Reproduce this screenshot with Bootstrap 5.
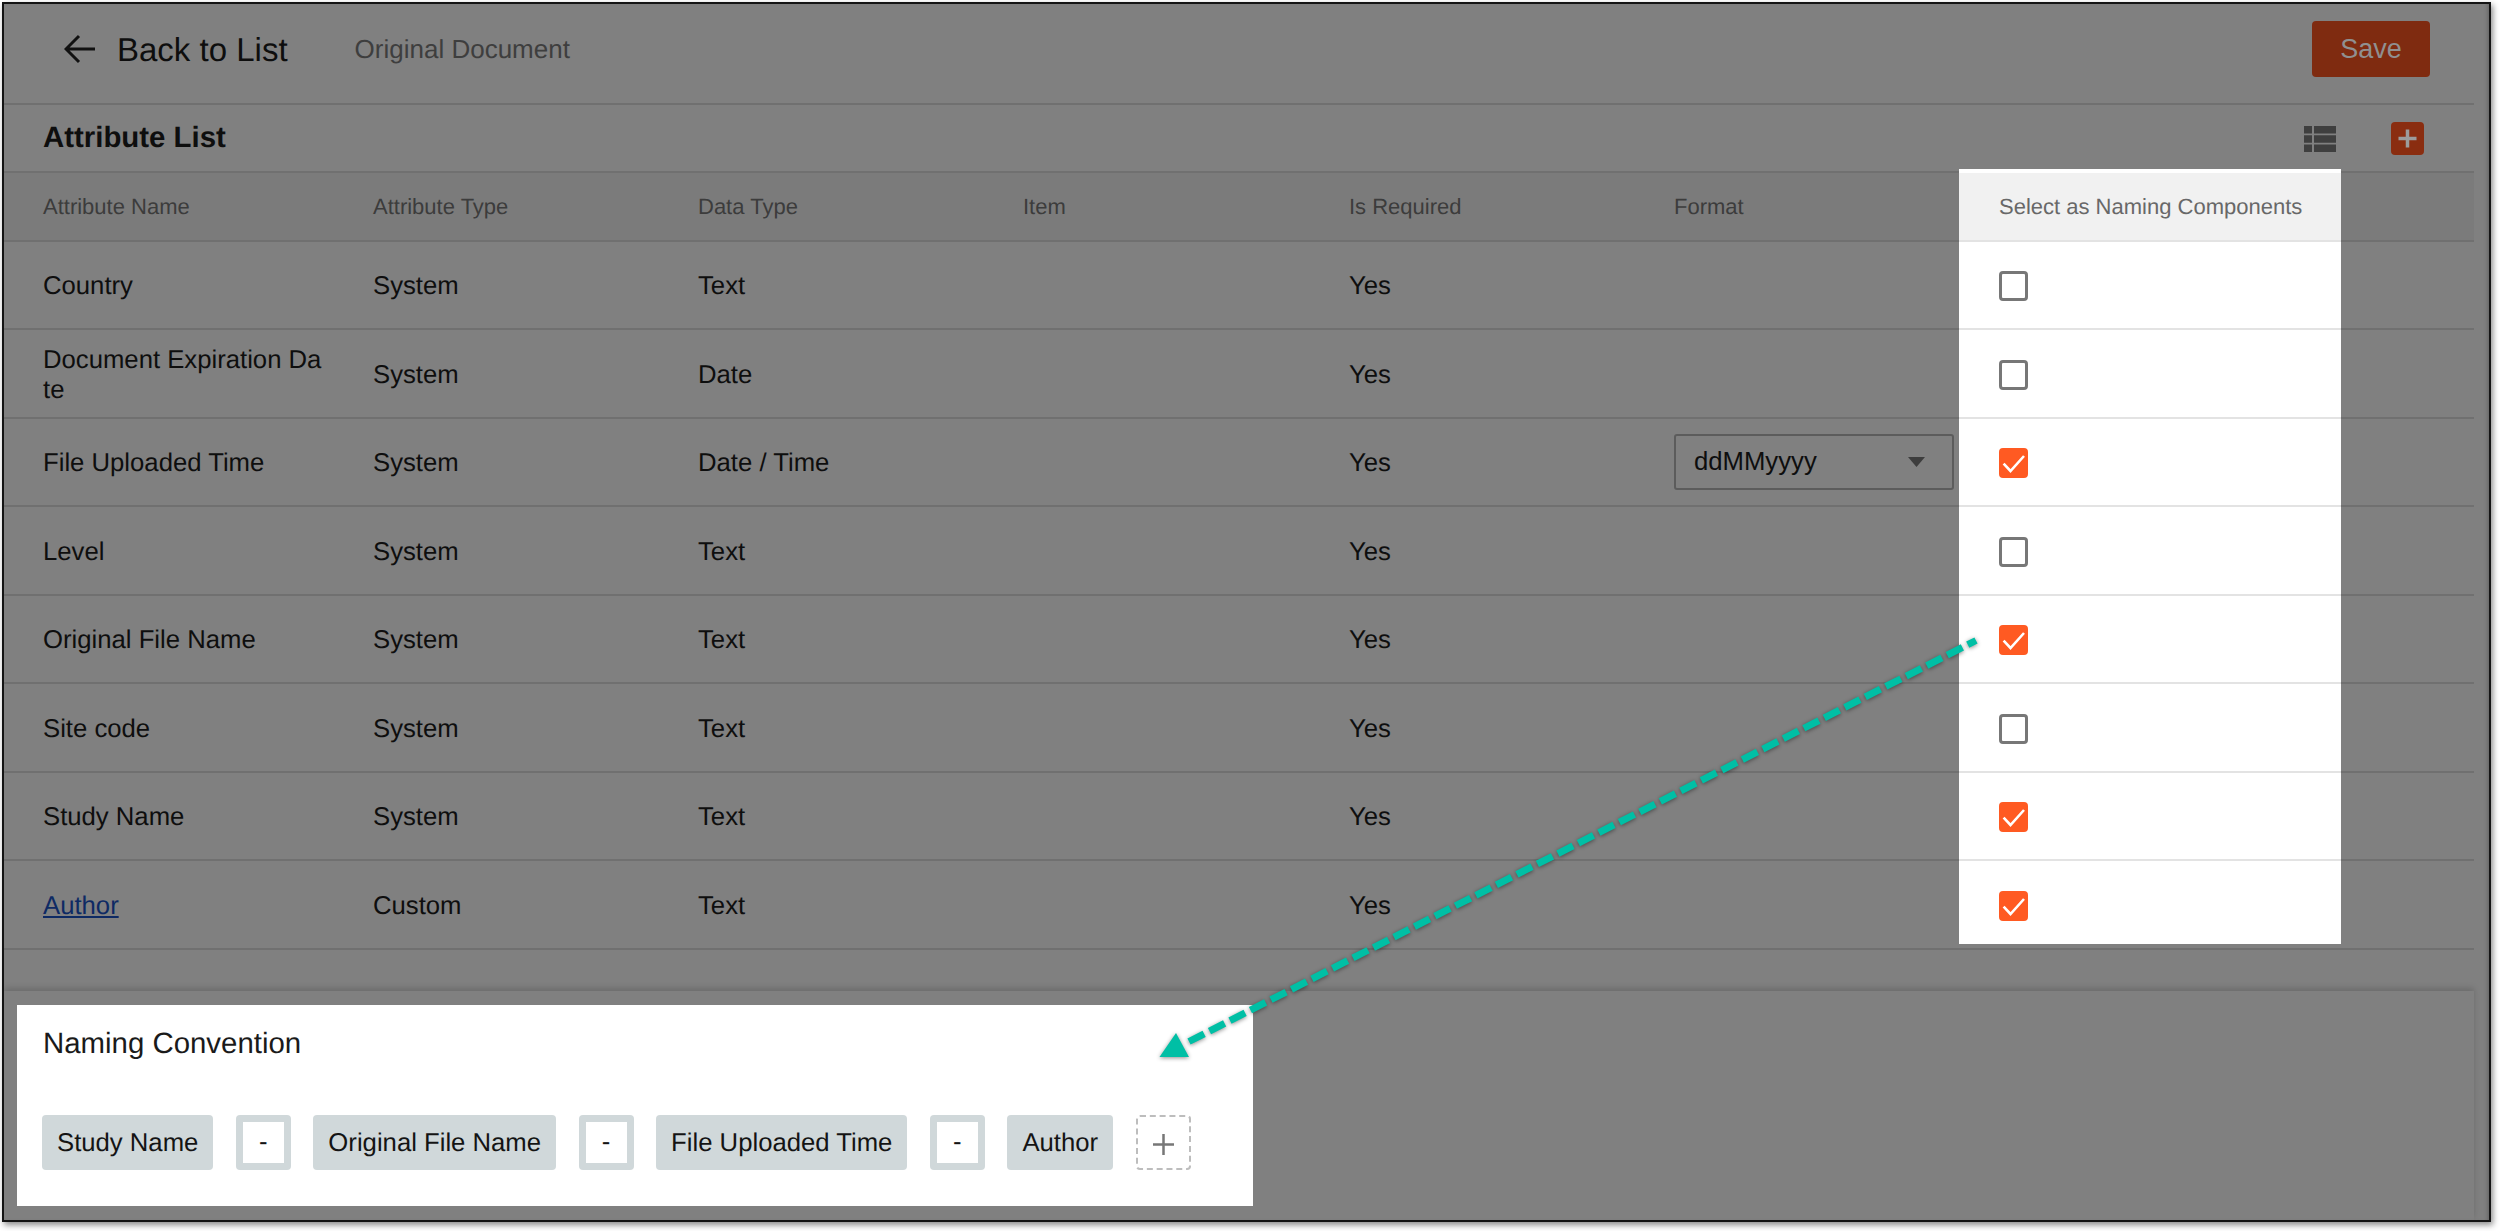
<!DOCTYPE html>
<html lang="en">
<head>
<meta charset="utf-8">
<title>Attribute List</title>
<link href="https://cdn.jsdelivr.net/npm/bootstrap@5.3.0/dist/css/bootstrap.min.css" rel="stylesheet">
<style>
html,body{margin:0;background:#fff;overflow:hidden}
body{font-family:"Liberation Sans",Arial,sans-serif;color:#0e0e0e;font-size:25.7px;width:2500px;height:1231px;position:relative;text-rendering:geometricPrecision}
.app-frame{position:relative;margin:2px 0 0 2px;width:2489px;height:1220px;border:2px solid #141414;background:#808080;box-shadow:2px 3px 6px rgba(0,0,0,.45),inset -4px 0 4px -3px rgba(0,0,0,.25);overflow:hidden}
.main-col{width:2470px}
.top-bar{height:101px;border-bottom:2px solid #707070;padding:0 44px 10px 60px}
.back-link{color:#0e0e0e;font-size:33px;text-decoration:none;gap:22px;margin:1.500px 67px 0 0;line-height:1}
.doc-name{color:#3e3e3e;font-size:26px;margin-top:2px}
.btn.btn-save{width:118px;height:56px;background:#7f2b10;border:0;border-radius:4px;color:#909090;font-size:27px;padding:2px 0 0;--bs-btn-hover-bg:#7f2b10;--bs-btn-hover-color:#909090}
.list-bar{height:68px;border-bottom:2px solid #707070;padding:1px 50px 0 39px}
.list-title{font-size:29.4px;font-weight:700;margin:-2px 0 0;color:#0e0e0e}
.btn.btn-plus{width:33px;height:33px;padding:0;border:0;border-radius:4px;background:#8a2d10;margin-left:55px;line-height:0}
.attr-table{table-layout:fixed;width:2470px;margin:0;--bs-table-bg:transparent;--bs-table-color:#0e0e0e;--bs-table-border-color:#707070;border-collapse:separate;border-spacing:0}
.attr-table th,.attr-table td{padding:0;vertical-align:middle;border-bottom:2px solid #707070;line-height:30px}
.attr-table td{padding-top:2px}
.attr-table thead th{height:69px;background:#7b7b7b;color:#3c3c3c;font-weight:400;font-size:22px;box-shadow:none}
.attr-table tbody tr:nth-child(odd) td{height:88px}
.attr-table tbody tr:nth-child(even) td{height:89px}
.attr-table .first-col{padding-left:39px;padding-right:50px;word-break:break-all}
.attr-table a{color:#0e2a64}
.attr-table .pick-col{background:#fff;padding-left:40px;border-bottom-color:#e3e3e3}
.attr-table thead .pick-col{background:#f1f1f1;color:#686868;position:relative}
.attr-table thead .pick-col::before{content:"";position:absolute;left:0;right:0;top:-4px;height:4px;background:#fff}
.attr-table tbody tr:last-child .pick-col{background:linear-gradient(#fff,#fff) top/100% calc(100% - 4px) no-repeat;border-bottom-color:#707070}
.form-select.format-select{width:280px;height:56px;margin-top:-2px;background-color:transparent;border:2px solid #5c5c5c;border-radius:3px;color:#0e0e0e;font-size:25.7px;padding:0 0 0 18px;line-height:1;background-image:url("data:image/svg+xml,%3Csvg xmlns='http://www.w3.org/2000/svg' viewBox='0 0 17 10'%3E%3Cpath fill='%233d3d3d' d='M0 0h17L8.500 10z'/%3E%3C/svg%3E");background-size:17px 10px;background-position:right 27px center}
.form-check-input.pick-box{width:29px;height:30px;margin:0;display:block;background-color:#fff;border:3px solid #777;border-radius:4px;box-shadow:none}
.form-check-input.pick-box:checked{background-color:#ff5a22;border-color:#ff5a22;background-size:29px 30px;background-position:center;background-origin:border-box;background-image:url("data:image/svg+xml,%3Csvg xmlns='http://www.w3.org/2000/svg' viewBox='0 0 29 30'%3E%3Cpath fill='none' stroke='%23fff' stroke-width='2.600' d='M4.600 15.700 11.500 23 25 8'/%3E%3C/svg%3E")}
.foot-band{margin-top:41px;height:230px;box-shadow:0 -3px 6px rgba(0,0,0,.16);padding:14px 0 0 12.500px}
.naming-card{width:1236px;height:201px;background:#fff;padding:22px 0 0 26.500px;color:#1a1a1a}
.naming-title{font-size:29.4px;font-weight:400;margin:0;line-height:34px}
.chip-row{margin-top:53.500px;gap:22.500px;margin-left:-1px}
.name-chip{height:55px;background:#d0d8da;border-radius:4px;padding:0 15px;font-size:25.7px;color:#141414;line-height:57px}
.sep-chip{width:55px;height:55px;background:#d0d8da;border-radius:4px;padding:7px}
.sep-chip>span{background:#fff;width:41px;height:41px;font-size:25.7px;line-height:41px;text-align:center;display:block;color:#141414}
.add-chip{width:55px;height:55px;border:2px dashed #bdbdbd;border-radius:4px;background:none;padding:0;line-height:0}
.flow-arrow{position:absolute;left:0;top:0;width:2500px;height:1231px;pointer-events:none;filter:drop-shadow(0 1px 2px rgba(0,0,0,.45))}
</style>
</head>
<body>
<div class="app-frame">
  <div class="main-col">
    <header class="top-bar d-flex align-items-center">
      <a class="back-link d-flex align-items-center" href="#">
        <svg width="31" height="30" viewBox="0 0 31 30" fill="none" stroke="#111" stroke-width="3"><path d="M31 15H3M15 2 2 15 15 28"/></svg>
        <span>Back to List</span>
      </a>
      <span class="doc-name">Original Document</span>
      <button type="button" class="btn btn-save ms-auto">Save</button>
    </header>
    <div class="list-bar d-flex align-items-center">
      <h2 class="list-title">Attribute List</h2>
      <svg class="ms-auto" width="32" height="26" viewBox="0 0 32 26" fill="#3f3f3f"><path d="M0 0h8v7.400H0zM10 0h22v7.400H10zM0 9.300h8v7.400H0zM10 9.300h22v7.400H10zM0 18.600h8V26H0zM10 18.600h22V26H10z"/></svg>
      <button type="button" class="btn btn-plus" aria-label="Add"><svg width="33" height="33" viewBox="0 0 33 33" stroke="#9c9c9c" stroke-width="3.500"><path d="M16.500 7.500v18M7.500 16.500h18"/></svg></button>
    </div>
    <table class="table attr-table">
      <colgroup><col style="width:369px"><col style="width:325px"><col style="width:325px"><col style="width:326px"><col style="width:325px"><col style="width:285px"><col style="width:382px"><col></colgroup>
      <thead><tr><th class="first-col">Attribute Name</th><th>Attribute Type</th><th>Data Type</th><th>Item</th><th>Is Required</th><th>Format</th><th class="pick-col">Select as Naming Components</th><th></th></tr></thead>
      <tbody>
        <tr><td class="first-col">Country</td><td>System</td><td>Text</td><td></td><td>Yes</td><td></td><td class="pick-col"><input class="form-check-input pick-box" type="checkbox" aria-label="Country"></td><td></td></tr>
        <tr><td class="first-col">Document Expiration Date</td><td>System</td><td>Date</td><td></td><td>Yes</td><td></td><td class="pick-col"><input class="form-check-input pick-box" type="checkbox" aria-label="Document Expiration Date"></td><td></td></tr>
        <tr><td class="first-col">File Uploaded Time</td><td>System</td><td>Date / Time</td><td></td><td>Yes</td><td><select class="form-select format-select" aria-label="Format"><option>ddMMyyyy</option></select></td><td class="pick-col"><input class="form-check-input pick-box" type="checkbox" checked aria-label="File Uploaded Time"></td><td></td></tr>
        <tr><td class="first-col">Level</td><td>System</td><td>Text</td><td></td><td>Yes</td><td></td><td class="pick-col"><input class="form-check-input pick-box" type="checkbox" aria-label="Level"></td><td></td></tr>
        <tr><td class="first-col">Original File Name</td><td>System</td><td>Text</td><td></td><td>Yes</td><td></td><td class="pick-col"><input class="form-check-input pick-box" type="checkbox" checked aria-label="Original File Name"></td><td></td></tr>
        <tr><td class="first-col">Site code</td><td>System</td><td>Text</td><td></td><td>Yes</td><td></td><td class="pick-col"><input class="form-check-input pick-box" type="checkbox" aria-label="Site code"></td><td></td></tr>
        <tr><td class="first-col">Study Name</td><td>System</td><td>Text</td><td></td><td>Yes</td><td></td><td class="pick-col"><input class="form-check-input pick-box" type="checkbox" checked aria-label="Study Name"></td><td></td></tr>
        <tr><td class="first-col"><a href="#">Author</a></td><td>Custom</td><td>Text</td><td></td><td>Yes</td><td></td><td class="pick-col"><input class="form-check-input pick-box" type="checkbox" checked aria-label="Author"></td><td></td></tr>
      </tbody>
    </table>
    <section class="foot-band">
      <div class="naming-card">
        <h3 class="naming-title">Naming Convention</h3>
        <div class="chip-row d-flex align-items-start">
          <span class="name-chip">Study Name</span>
          <span class="sep-chip"><span>-</span></span>
          <span class="name-chip">Original File Name</span>
          <span class="sep-chip"><span>-</span></span>
          <span class="name-chip">File Uploaded Time</span>
          <span class="sep-chip"><span>-</span></span>
          <span class="name-chip">Author</span>
          <button type="button" class="add-chip" aria-label="Add component"><svg width="51" height="51" viewBox="0 0 51 51" stroke="#777" stroke-width="2.500"><path d="M25.500 17v21M15 27.500h21"/></svg></button>
        </div>
      </div>
    </section>
  </div>
</div>
<svg class="flow-arrow" viewBox="0 0 2500 1231" aria-hidden="true">
  <line x1="1189" y1="1041.500" x2="1976" y2="640.500" stroke="#00bfa5" stroke-width="7" stroke-dasharray="17 6"/>
  <path d="M1176 1033 1159.500 1057H1189z" fill="#00bfa5"/>
</svg>
<script src="https://cdn.jsdelivr.net/npm/bootstrap@5.3.0/dist/js/bootstrap.bundle.min.js"></script>
</body>
</html>
